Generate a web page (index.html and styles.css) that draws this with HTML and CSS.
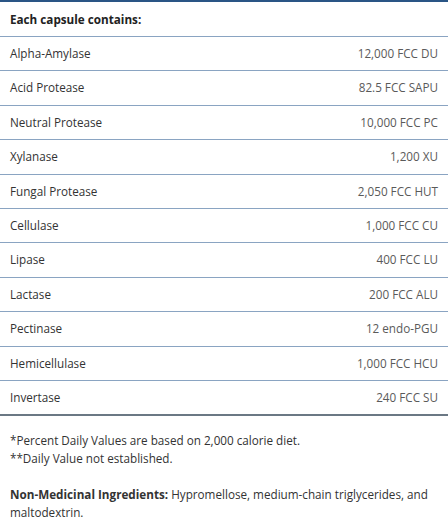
FILE: index.html
```html
<!DOCTYPE html>
<html>
<head>
<meta charset="utf-8">
<link rel="stylesheet" href="styles.css">
</head>
<body>
<div class="panel">
  <table class="facts">
    <thead>
      <tr><th colspan="2">Each capsule contains:</th></tr>
    </thead>
    <tbody>
      <tr><td>Alpha-Amylase</td><td class="val">12,000 FCC DU</td></tr>
      <tr><td>Acid Protease</td><td class="val">82.5 FCC SAPU</td></tr>
      <tr><td>Neutral Protease</td><td class="val">10,000 FCC PC</td></tr>
      <tr><td>Xylanase</td><td class="val">1,200 XU</td></tr>
      <tr><td>Fungal Protease</td><td class="val">2,050 FCC HUT</td></tr>
      <tr><td>Cellulase</td><td class="val">1,000 FCC CU</td></tr>
      <tr><td>Lipase</td><td class="val">400 FCC LU</td></tr>
      <tr><td>Lactase</td><td class="val">200 FCC ALU</td></tr>
      <tr><td>Pectinase</td><td class="val">12 endo-PGU</td></tr>
      <tr><td>Hemicellulase</td><td class="val">1,000 FCC HCU</td></tr>
      <tr class="last"><td>Invertase</td><td class="val">240 FCC SU</td></tr>
    </tbody>
  </table>
  <p class="notes first">*Percent Daily Values are based on 2,000 calorie diet.<br>**Daily Value not established.</p>
  <p class="notes">
    <strong>Non-Medicinal Ingredients:</strong> Hypromellose, medium-chain triglycerides, and maltodextrin.</p>
</div>
</body>
</html>
```
FILE: styles.css
```css
html, body {
  margin: 0;
  padding: 0;
  background: #ffffff;
}
body {
  font-family: "Open Sans", "DejaVu Sans", sans-serif;
  font-size: 11.7px;
  color: #333333;
}
.facts {
  width: 100%;
  border-collapse: collapse;
  border-top: 2px solid #2a5585;
  border-bottom: 2px solid #6b7884;
}
.facts th {
  text-align: left;
  font-weight: 700;
  padding: 8px 10px;
  line-height: 18px;
  border-bottom: 1px solid #8aa4c2;
  color: #222222;
}
.facts td {
  padding: 8px 10px;
  line-height: 17.4px;
  border-bottom: 1px solid #8aa4c2;
}
.facts tr.last td {
  border-bottom: none;
}
.facts td.val {
  text-align: right;
  color: #5a5a5a;
}
.notes {
  margin: 18px 10px 0;
  line-height: 18px;
}
.notes.first {
  margin-top: 15px;
}
.notes strong {
  font-weight: 700;
}
```
